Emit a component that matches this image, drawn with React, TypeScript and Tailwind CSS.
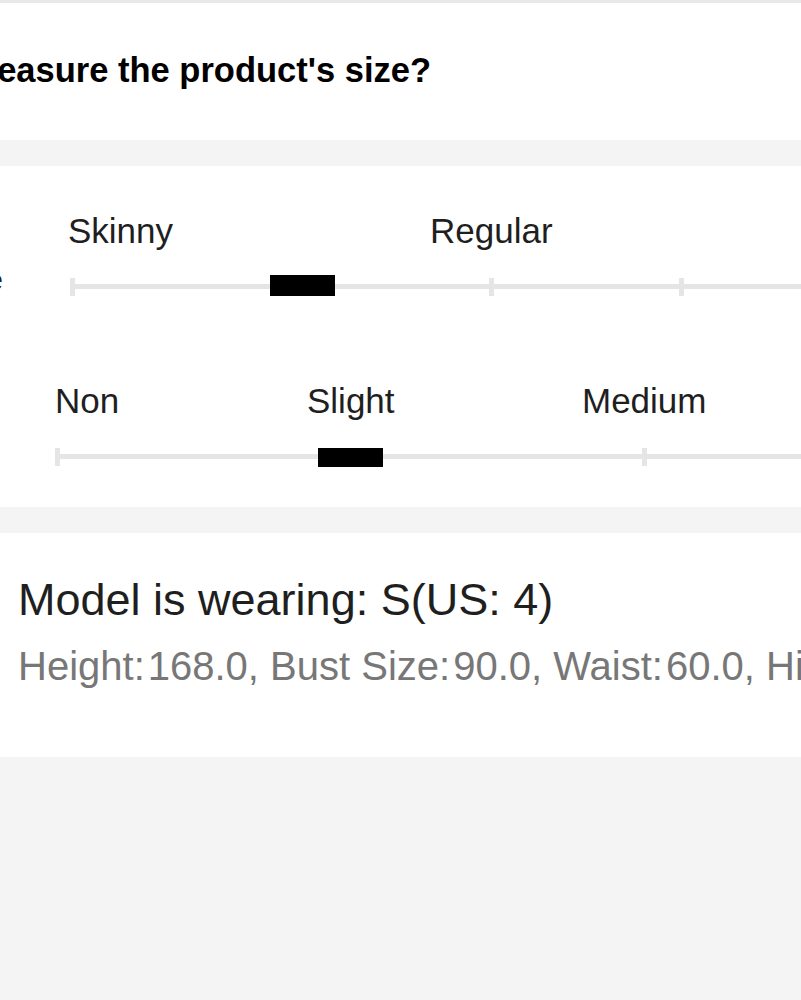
import React from "react";

const font = { fontFamily: '"Liberation Sans", Arial, sans-serif' };

const measurements = [
  ["Height", "168.0"],
  ["Bust Size", "90.0"],
  ["Waist", "60.0"],
  ["Hips", "90.0"],
];

function Tick({ left }: { left: string }) {
  return <span className={`absolute top-[-6px] h-[18px] w-[5px] bg-[#e5e5e5] ${left}`} />;
}

export default function App() {
  return (
    <div style={font} className="w-[801px] min-h-[1000px] overflow-hidden bg-[#f4f4f4]">
      {/* Question header */}
      <section className="border-t-[3px] border-[#e8e8e8] bg-white h-[140px] pt-[50px]">
        <div className="flex w-[431px] justify-end">
          <h2 className="whitespace-nowrap text-[34.5px] leading-[34.5px] font-bold text-black">
            How to measure the product's size?
          </h2>
        </div>
      </section>

      {/* Fit scales */}
      <section className="mt-[26px] bg-white h-[341px] pt-[47px] text-[35px] leading-[35px] text-[#1f1f1f]">
        {/* Row 1 */}
        <div className="flex pl-[68px]">
          <span className="w-[362px] shrink-0">Skinny</span>
          <span>Regular</span>
        </div>
        <div className="mt-[36px] flex h-[5px] items-center">
          <span className="-ml-[200px] mb-[14px] w-[203px] shrink-0 whitespace-nowrap text-right text-[30px] leading-[30px]">
            Fit Type
          </span>
          <div className="relative ml-[67px] h-[5px] flex-1 bg-[#e5e5e5]">
            <Tick left="left-0" />
            <Tick left="left-[419px]" />
            <Tick left="left-[609px]" />
            <span className="absolute left-[200px] top-[-9px] h-[21px] w-[65px] bg-black" />
          </div>
        </div>

        {/* Row 2 */}
        <div className="mt-[94px] flex pl-[55px]">
          <span className="w-[252px] shrink-0">Non</span>
          <span className="w-[275px] shrink-0">Slight</span>
          <span>Medium</span>
        </div>
        <div className="mt-[36px] pl-[55px]">
          <div className="relative h-[5px] bg-[#e5e5e5]">
            <Tick left="left-0" />
            <Tick left="left-[587px]" />
            <span className="absolute left-[263px] top-[-6px] h-[19px] w-[65px] bg-black" />
          </div>
        </div>
      </section>

      {/* Model info */}
      <section className="mt-[26px] bg-white h-[224px] pt-[44px] pl-[18px]">
        <p className="whitespace-nowrap text-[45px] leading-[45px] text-[#1f1f1f]">Model is wearing: S(US: 4)</p>
        <p className="mt-[24px] whitespace-nowrap text-[40px] leading-[40px] text-[#777777]">
          {measurements.map(([label, value], i) => (
            <React.Fragment key={label}>
              {i > 0 && ", "}
              {label}:<span className="ml-[3px]">{value}</span>
            </React.Fragment>
          ))}
        </p>
      </section>
    </div>
  );
}
